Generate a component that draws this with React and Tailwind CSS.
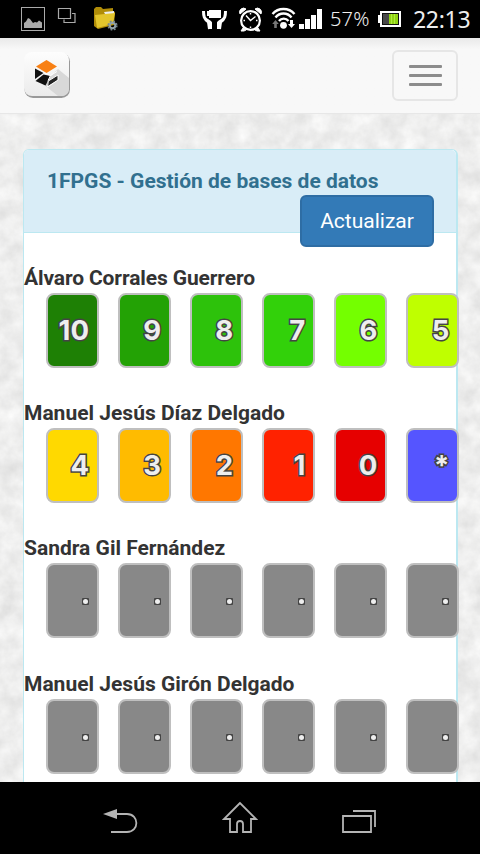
import React from "react";

const students = [
  {
    name: "Álvaro Corrales Guerrero",
    tracking: "tracking-[-0.120px]",
    cards: [
      { label: "10", bg: "bg-[#1e8005]" },
      { label: "9", bg: "bg-[#23a205]" },
      { label: "8", bg: "bg-[#2dc20b]" },
      { label: "7", bg: "bg-[#32d10a]" },
      { label: "6", bg: "bg-[#74ff00]" },
      { label: "5", bg: "bg-[#bfff00]" },
    ],
  },
  {
    name: "Manuel Jesús Díaz Delgado",
    tracking: "tracking-normal",
    cards: [
      { label: "4", bg: "bg-[#ffd900]" },
      { label: "3", bg: "bg-[#ffbb00]" },
      { label: "2", bg: "bg-[#ff7700]" },
      { label: "1", bg: "bg-[#ff2200]" },
      { label: "0", bg: "bg-[#e60000]" },
      { label: "*", bg: "bg-[#5555ff]" },
    ],
  },
  {
    name: "Sandra Gil Fernández",
    tracking: "tracking-normal",
    cards: Array(6).fill({ label: "", bg: "bg-[#888888]" }),
  },
  {
    name: "Manuel Jesús Girón Delgado",
    tracking: "tracking-normal",
    cards: Array(6).fill({ label: "", bg: "bg-[#888888]" }),
  },
];

function StatusBar() {
  return (
    <header className="flex h-[38px] shrink-0 bg-black text-[#eee]">
      <svg width="330" height="38" viewBox="0 0 330 38" className="shrink-0">
        <rect x="21.500" y="7.500" width="23" height="23" fill="none" stroke="#aaa" />
        <path d="M24 28v-5l2-1.500 2-3.500 2 1 3 4 2-1 2 .5 2-2 3 2v5.500z" fill="#aaa" />
        <path d="M58.500 8.500h12v10h-12zM72 13.500h3v9h-11v-3" fill="none" stroke="#aaa" strokeWidth="1.200" />
        <path d="M94 9l2-2h5l2 2 10-1v3l2 1-1 13-16 4-4-3z" fill="#b08c08" />
        <path d="M104 12l10-1v5h-8z" fill="#eee" />
        <path d="M95 15l20-2-2 11-16 4z" fill="#e3c52c" />
        <circle cx="112.500" cy="25.500" r="2.800" fill="none" stroke="#91a2aa" strokeWidth="2" />
        <circle cx="112.500" cy="25.500" r="4.300" fill="none" stroke="#78878f" strokeWidth="1.600" strokeDasharray="1.800 1.600" />
        <path d="M203.500 11c0 5 .5 8 5 11l1 7M225.500 11c0 5-.5 8-5 11l-1 7" fill="none" stroke="#fff" strokeWidth="3" />
        <path d="M205 17l6 4 3 4v4h-6v-5zM224 17l-6 4-3 4v4h6v-5z" fill="#fff" />
        <path d="M214.500 18v12" stroke="#000" strokeWidth="5" />
        <path d="M207 11h2v-1h12v8h-12v-2h-2z" fill="#fff" />
        <circle cx="250.500" cy="20.500" r="9.400" fill="none" stroke="#fff" strokeWidth="2.200" />
        <path d="M240 14a4 4 0 0 1 6-5zM261 14a4 4 0 0 0-6-5zM243 28l-2 3h3l2-1zM258 28l2 3h-3l-2-1z" fill="#fff" stroke="#fff" />
        <path d="M246 15.500l4.500 5 5-4M250.500 13v1.500M250.500 26.500V28M243.500 20.500h1.500M256 20.500h1.500" fill="none" stroke="#fff" strokeWidth="1.400" />
        <path d="M272.500 14a14.500 14.500 0 0 1 22 0M275.500 17.500a10 10 0 0 1 16 0M279 21a6 6 0 0 1 9.500 0" fill="none" stroke="#fff" strokeWidth="2.400" />
        <circle cx="283.500" cy="25.300" r="3.400" fill="#fff" />
        <path d="M275.500 20l3.300 4h-2v4h-2.600v-4h-2z" fill="#777" />
        <path d="M290 20h3v4h2l-3.500 4-3.500-4h2z" fill="#fff" />
        <path d="M299 24h5v5h-5zM305 19h5v10h-5zM311 15h5v14h-5zM317 9h5v20h-5z" fill="#fff" />
      </svg>
      <div className="flex items-center font-['Noto_Sans',sans-serif] whitespace-nowrap">
        <span className="w-[48px] text-[20px] font-light tracking-[0.200px]">57%</span>
        <svg width="24" height="18" viewBox="378 10 24 18" className="shrink-0">
          <path d="M378 15h2v-4h21v16h-21v-4h-2z" fill="#fff" />
          <path d="M382 13h17v12h-17z" fill="#111" />
          <path d="M383 14h6v10h-6z" fill="#484848" />
          <path d="M389 14h9v10h-9z" fill="#8fd312" />
          <path d="M391.500 14v10M394.500 14v10" stroke="#b0ea3c" />
        </svg>
        <span className="ml-[11px] text-[23px] tracking-[-0.300px]">22:13</span>
      </div>
    </header>
  );
}

function Logo() {
  return (
    <svg width="50" height="50" viewBox="0 0 50 50">
      <defs>
        <linearGradient id="tile" x1="0" y1="0" x2="0" y2="1">
          <stop stopColor="#fdfdfd" />
          <stop offset="1" stopColor="#ebebeb" />
        </linearGradient>
      </defs>
      <rect x="1.500" y="2" width="45.500" height="45" rx="8.500" fill="#999" />
      <rect x="1" y="1" width="45" height="44" rx="8" fill="url(#tile)" />
      <path d="M35 18l11 9v10q0 8-8 8h-3l-15-12z" fill="#d8d8d8" />
      <path d="M23.500 9L34 15.500 23.500 22 13 15.500z" fill="#f88014" />
      <path d="M12 17.500l8.500 4.500-8.500 6z" fill="#111" />
      <path d="M12.500 30l8-6.500 7 1.500-5 9.500z" fill="#111" />
      <path d="M24 35.500l1-5.500 10-6v5z" fill="#252525" />
      <path d="M20.500 21.500l7 3-2.500 5M27.500 24.500l6.500-4M24.500 36l.8-6 9.700-6v5z" fill="none" stroke="#fff" strokeWidth="1" />
    </svg>
  );
}

function GradeCard({ card }) {
  return (
    <div
      className={`flex h-[75px] w-[53px] shrink-0 items-center justify-end rounded-[8px] border-2 border-[#bfbfbf] pr-[8px] ${card.bg}`}
    >
      {card.label ? (
        <span className="font-['Inter',sans-serif] text-[27.500px] leading-[28px] font-bold -mt-px text-[#eee] [-webkit-text-stroke:3px_#444] [paint-order:stroke_fill]">
          {card.label}
        </span>
      ) : (
        <span className="mt-[2px] flex size-[7px] items-center justify-center rounded-[1px] bg-[#444]">
          <span className="size-[5px] rounded-full bg-[#eee]" />
        </span>
      )}
    </div>
  );
}

function Texture() {
  return (
    <svg className="absolute inset-0 h-full w-full" aria-hidden="true">
      <filter id="plaster" x="0" y="0" width="100%" height="100%" colorInterpolationFilters="sRGB">
        <feTurbulence type="fractalNoise" baseFrequency="0.055" numOctaves="5" seed="8" />
        <feColorMatrix values="0.14 0 0 0 0.862  0.14 0 0 0 0.862  0.14 0 0 0 0.860  0 0 0 0 1" />
      </filter>
      <rect width="100%" height="100%" filter="url(#plaster)" />
    </svg>
  );
}

function NavigationBar() {
  return (
    <footer className="flex h-[72px] shrink-0 items-start justify-between bg-black px-[103px] pt-[18px]">
      <svg width="36" height="40" viewBox="103 800 36 40" fill="none" stroke="#b4b4b4" strokeWidth="1.800">
        <path d="M115 814h12c12.500 0 12.500 18 0 18h-16" />
        <path d="M103 814l14-5v10z" fill="#b4b4b4" stroke="none" />
      </svg>
      <svg width="36" height="40" viewBox="222 800 36 40" fill="none" stroke="#b4b4b4" strokeWidth="1.800">
        <path d="M240 803l-16 16h6v13h7v-8q0-3 3-3t3 3v8h8v-13h5z" />
      </svg>
      <svg width="36" height="40" viewBox="342 800 36 40" fill="none" stroke="#b4b4b4" strokeWidth="1.800">
        <path d="M344 816h28v16h-28zM354 811h22v16" />
      </svg>
    </footer>
  );
}

export default function App() {
  return (
    <div className="flex h-[854px] w-[480px] flex-col overflow-hidden font-['Roboto',sans-serif]">
      <StatusBar />
      <nav className="flex h-[76px] shrink-0 items-center justify-between border-b border-[#e7e7e7] bg-[#f8f8f8] bg-linear-to-b from-[#e9e9e9] via-[#f8f8f8] via-15% to-[#f8f8f8] pr-[22px] pl-[23px]">
        <Logo />
        <button className="flex h-[51px] w-[66px] flex-col items-center justify-center gap-[6px] rounded-[6px] border-2 border-[#e6e6e6]">
          <span className="h-[3px] w-[33px] rounded-[1px] bg-[#8c8c8c]" />
          <span className="h-[3px] w-[33px] rounded-[1px] bg-[#8c8c8c]" />
          <span className="h-[3px] w-[33px] rounded-[1px] bg-[#8c8c8c]" />
        </button>
      </nav>
      <main className="relative flex min-h-0 flex-1 overflow-hidden bg-[#eee] pt-[35px] pl-[23px]">
        <Texture />
        <section className="relative flex h-[660px] w-[435px] flex-col rounded-[6px] border border-r-2 border-[#bce8f1] bg-white">
          <div className="flex h-[83px] shrink-0 flex-col rounded-t-[5px] border-b border-[#bce8f1] bg-[#d9edf7] pr-[22px] pl-[23px] pt-[19px]">
            <h1 className="text-[21px] leading-[24px] font-bold whitespace-nowrap text-[#31708f]">
              1FPGS - Gestión de bases de datos
            </h1>
            <button className="mt-[2px] h-[52px] w-[134px] shrink-0 self-end rounded-[6px] border-2 border-[#2e6da4] bg-[#337ab7] pb-px text-[21px] leading-[30px] text-white">
              Actualizar
            </button>
          </div>
          <div className="flex flex-col gap-[30.200px] pt-[30px]">
            {students.map((student) => (
              <div key={student.name} className="flex h-[105px] shrink-0 flex-col">
                <h2
                  className={`h-[30px] text-[21px] leading-[30px] font-bold whitespace-nowrap text-[#333] ${student.tracking}`}
                >
                  {student.name}
                </h2>
                <div className="flex gap-[19.080px] pl-[22px]">
                  {student.cards.map((card, i) => (
                    <GradeCard key={i} card={card} />
                  ))}
                </div>
              </div>
            ))}
          </div>
        </section>
      </main>
      <NavigationBar />
    </div>
  );
}
